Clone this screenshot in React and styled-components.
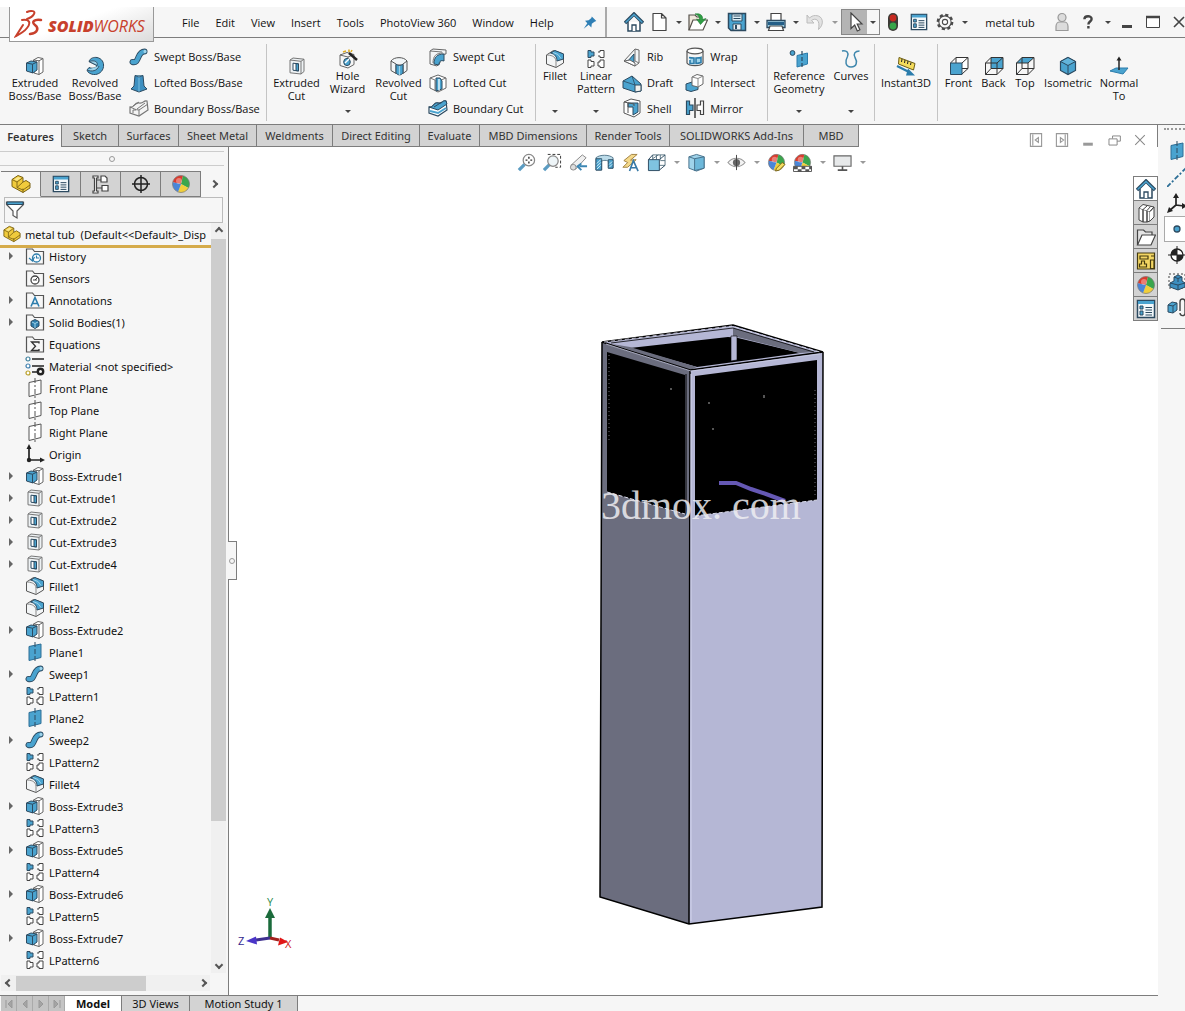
import styled, { createGlobalStyle } from "styled-components";

const blue = "#4aa3cf";
const sky = "#9fd3ea";
const ink = "#2c4a60";
const line = "#7d7d7d";

/* all glyphs are drawn on a 20 x 20 grid */
const art = {
  home: (
    <>
      <path d="M4 10v9h12v-9" fill="#fff" stroke={ink} strokeWidth="1.5" />
      <path d="M1 11 10 2l9 9" fill="none" stroke={ink} strokeWidth="3.4" />
      <path d="M1.6 10.6 10 2.4l8.4 8.2" fill="none" stroke={blue} strokeWidth="1.4" />
      <path d="M8 19v-6h4v6" fill="#fff" stroke={ink} strokeWidth="1.3" />
    </>
  ),
  file: <path d="M4 1.5h8.5l4.500 4.500v12.500H4zM12.500 1.500v4.500H17" fill="#fff" stroke="#444" strokeWidth="1.200" strokeLinejoin="round" />,
  open: (
    <>
      <path d="M1 18V3h6l2 2h4v4" fill="#f0e9dd" stroke="#55504a" strokeWidth="1.200" />
      <path d="M1 18 5 8h14.500L15 18z" fill="#fff" stroke="#55504a" strokeWidth="1.200" />
      <path d="M7 2c6-1 8 2 7.500 5.500l3.500-1-5.500 6L8.500 7l3 1C11.500 5 10.500 3 7 2z" fill="#2f9e44" stroke="#1f7a33" strokeWidth=".600" />
    </>
  ),
  save: (
    <>
      <path d="M1.500 1.500h17v17H4l-2.500-2.500z" fill={blue} stroke={ink} strokeWidth="1.500" />
      <path d="M5 2h10v7H5z" fill="#dceef6" stroke={ink} />
      <path d="M6.500 4h7M6.500 6.500h7" stroke={ink} />
      <path d="M6 12h8v6H6z" fill="#e9eef2" stroke={ink} />
      <path d="M8 13h2v4H8z" fill={ink} />
    </>
  ),
  print: (
    <>
      <path d="M5 1.500h10V9H5z" fill="#fff" stroke="#444" strokeWidth="1.200" />
      <path d="M1 8.500h18v7H1z" fill={sky} stroke={ink} strokeWidth="1.300" />
      <path d="M2 11.500h16" stroke="#245f88" strokeWidth="3" />
      <path d="M4 14h12l1.500 4.500h-15z" fill="#fff" stroke="#444" strokeWidth="1.200" />
    </>
  ),
  undo: <path d="M2 3v8h7L6.500 8.500c4-3 9-1 7 9 6-5 5-14-3-14-3 0-4 1-6 2.500z" fill="#e2e2e2" stroke="#bcbcbc" />,
  cursor: <path d="M6 1v15.500l3.700-3.500 2.600 6 2.600-1.200-2.700-5.800H17z" fill="#fff" stroke="#444" strokeWidth="1.200" />,
  traffic: (
    <>
      <rect x="5" y="1" width="10" height="18" rx="5" fill="#3c3b36" />
      <circle cx="10" cy="6" r="3.400" fill="#c62a20" />
      <circle cx="10" cy="14" r="3.400" fill="#37a549" />
    </>
  ),
  list: (
    <>
      <path d="M1.500 1.500h17v17h-17z" fill="#f4f9fb" stroke={ink} strokeWidth="1.500" />
      <path d="M2 2h16v3H2z" fill={blue} />
      <path d="M4 7h3v3H4zM4 12h3v4H4z" fill={blue} stroke={ink} />
      <path d="M9.500 8.500H16M9.500 11H16M9.500 13.500H16M9.500 16H16" stroke={ink} strokeWidth="1.100" />
    </>
  ),
  gear: (
    <>
      <circle cx="10" cy="10" r="8" fill="none" stroke="#4a4a4a" strokeWidth="2.600" strokeDasharray="3.500 2.780" />
      <circle cx="10" cy="10" r="6.800" fill="#f8f8f8" stroke="#4a4a4a" strokeWidth="1.200" />
      <circle cx="10" cy="10" r="2.900" fill="#fff" stroke="#4a4a4a" strokeWidth="1.200" />
    </>
  ),
  user: (
    <g fill="#dcdcdc" stroke="#999" strokeWidth="1.200">
      <circle cx="10" cy="5.500" r="4" />
      <path d="M4 18.500v-4c0-3 2-4.500 3.500-4.500h5c1.500 0 3.500 1.500 3.500 4.500v4z" />
    </g>
  ),
  help: <path d="M5.500 6.500C5.500 1.500 14.500 1.500 14.500 6.300c0 3-4 3.200-4 6.700M10.500 15v3" fill="none" stroke="#444" strokeWidth="3" />,
  min: <path d="M5 14.500h10" stroke="#444" strokeWidth="3" />,
  max: (
    <>
      <path d="M3.500 4.500h13v11h-13z" fill="#fff" stroke="#444" />
      <path d="M3 5h14" stroke="#444" strokeWidth="2.500" />
    </>
  ),
  close: <path d="m5 5 10 10M15 5 5 15" stroke="#444" strokeWidth="1.600" />,
  pin: <path d="m12 4 5 5-2 .6-3 2.400-.5 4-3-3L3 17.500 7 11.500 4.500 8.500l4-.500 3-2.500z" fill="#2f7fb5" />,
  boss: (
    <>
      <path d="M8.500 4 13 1.500 18 2.500v13.500L14 18.500l-5-1.500z" fill="#fff" stroke="#666" />
      <path d="M14 4.800 18 2.500M14 4.800v13.700M14 4.800 8.500 4" stroke="#666" fill="none" />
      <path d="m1.500 7 4.500-2 6 1v8l-4 3-6.500-2z" fill={blue} stroke={ink} />
      <path d="m1.500 7 6 1.200L12 6M7.500 8.200V17" fill="none" stroke={ink} />
    </>
  ),
  cut: (
    <>
      <path d="M3 4 6 2l11 1.200v12.300L14 18 3 16.800z" fill="#eef2f4" stroke="#777" />
      <path d="M3 4l11 1.300V18M14 5.300l3-2.100" fill="none" stroke="#777" />
      <path d="M6 7.200l5.500.6v7.200L6 14.200z" fill="#fff" stroke={ink} />
      <path d="M9 7.600l2.500.3V15L9 14.500z" fill={blue} stroke={ink} />
    </>
  ),
  revolve: (
    <>
      <path d="M4 5.500C5 2 9 1 12 1.500c5 1 7 5 6.500 9-.500 5-5 8.500-10 8-3-.300-6-2-6.500-4.500l2-2.500c4 1.500 7 .500 8-2z" fill={blue} stroke={ink} />
      <path d="M4 5.500 12 9.500c1.500-3-2-6-8-4zM2 14c5 2 10 1 12-4" fill={sky} stroke={ink} strokeWidth=".900" />
    </>
  ),
  revolveCut: (
    <>
      <path d="M2 5c3-4.500 13-4.500 16 0v9.500l-4 3V9H7v8.500l-5-3z" fill="#f1f5f7" stroke="#555" />
      <path d="M7 8c2 2 5 2 7 0v9c-2 2.500-5 2.500-7 0z" fill={blue} stroke={ink} />
      <path d="M2 5l5 3M18 5l-4 3" stroke="#555" fill="none" />
      <path d="M10.500 10v9" stroke={sky} strokeWidth="1.200" />
    </>
  ),
  hole: (
    <>
      <path d="m2 6 7-2.500L16 5.500v10L10 19l-8-2.500z" fill="#f6f6f6" stroke="#666" />
      <path d="m2 6 8 2L16 5.500M10 8v2" fill="none" stroke="#666" />
      <ellipse cx="9" cy="13" rx="3.300" ry="3.600" fill={blue} stroke={ink} />
      <path d="m7 14 4-4" stroke="#fff" strokeWidth="1.500" />
      <path d="m11 4 8 7" stroke="#222" strokeWidth="2.400" />
      <path d="m5 3 3-1M11 .500V3M14 1l-1 2" stroke="#e0ae26" strokeWidth="1.600" />
    </>
  ),
  sweep: (
    <>
      <path d="M3.500 15c7 2 4.500-10.500 12-10.500" fill="none" stroke={ink} strokeWidth="6" strokeLinecap="round" />
      <path d="M3.500 15c7 2 4.500-10.500 12-10.500" fill="none" stroke={blue} strokeWidth="4.200" strokeLinecap="round" />
      <ellipse cx="16" cy="4.500" rx="1.500" ry="1.800" fill={sky} />
    </>
  ),
  loft: (
    <>
      <path d="M6 2.500h8l1 10.500 3 3-8 3-8-3 3-3z" fill="#3d8fc0" stroke={ink} />
      <path d="m6 2.500 4 1.500 4-1.500" fill={sky} stroke={ink} strokeWidth=".800" />
      <path d="M10 4.500V18.500" stroke="#7cc1e2" />
    </>
  ),
  boundary: (
    <>
      <path d="M1 9c5 1 4-5 9-4s4-3 8-2l1 9-9 6-9-3z" fill="#f4f4f4" stroke="#777" strokeWidth="1.200" />
      <path d="M1 9c3 1 5 3 9 3l9-6M10 12v6M4 8l6-4M8 11l8-6M4 15v-3h3" fill="none" stroke="#777" />
    </>
  ),
  sweepCut: (
    <>
      <path d="M2 4 5 2l13 1v4c-6 0-6 4-6 9l-3 3-7-2z" fill="#f3f5f6" stroke="#666" />
      <path d="M2 4l12 1M5 16c0-7 3-10 10-10" fill="none" stroke="#777" />
      <path d="M6 17C6 10 9 7 16 7v7c-3-1-5 0-5 4z" fill={blue} stroke={ink} />
    </>
  ),
  loftCut: (
    <>
      <path d="m2 5 8-3 8 3v10l-8 4-8-4z" fill="#fff" stroke="#666" />
      <path d="m2 5 5 2v11M18 5l-5 2" fill="none" stroke="#777" />
      <path d="M8 5h4l2 3v8l-6 2z" fill={blue} stroke={ink} />
      <path d="M11 6v11" stroke="#e2f4fb" strokeWidth="1.500" />
    </>
  ),
  boundaryCut: (
    <>
      <path d="M1 9c5 1 4-5 9-4s4-3 8-2l1 9-9 6-9-3z" fill="#fff" stroke={ink} strokeWidth="1.200" />
      <path d="M1 9c5 1 4-5 9-4s4-3 8-2l1 3-9 6z" fill={blue} stroke={ink} />
      <path d="m2 13 8 2 8-5" fill="none" stroke={blue} strokeWidth="2" />
      <path d="M6 9l8-5" fill="none" stroke={ink} />
    </>
  ),
  fillet: (
    <>
      <path d="m1.500 6 7-4.500 10 3.500V14L11 18.500 1.500 15z" fill="#f3f5f6" stroke="#555" />
      <path d="M11 18.500V12M1.500 6c4 0 9 1 9.500 6" fill="none" stroke="#888" />
      <path d="m5.500 4 4.500-2.500 8.500 3.500v5L12 12c0-4-2-7-6.500-8z" fill={blue} stroke={ink} />
      <path d="m8 3.500 5 2 3 4" fill="none" stroke={sky} />
    </>
  ),
  pattern: (
    <g fill="#fff" stroke="#444">
      <path d="M2 1.500h3v1.500h3v4H5v1.500H2z" fill={blue} stroke={ink} />
      <path d="M12 3h2V1.500h4v7h-4V7h-2M8 12.500H5V11H2v7.500h3V17h3zM12 13h2v-2h4v7.500h-4V17h-2z" />
    </g>
  ),
  rib: (
    <>
      <path d="M2 14 13 2l4 1v13l-4 3z" fill="#f3f5f6" stroke="#666" />
      <path d="m5 15 7-8v10z" fill={blue} stroke={ink} />
      <path d="M13 2v12l4 2" fill="none" stroke="#777" />
      <path d="m2 14 6-1 5 3v3z" fill="#fff" stroke="#666" />
    </>
  ),
  draft: (
    <>
      <path d="m1 8 9-5 9 8v7l-6 1-12-4z" fill={blue} stroke={ink} />
      <path d="M13 12h6v6l-6 1z" fill="#f1f1ee" stroke={ink} />
      <path d="m1 8 12 4L10 3" fill="none" stroke={ink} strokeWidth=".800" />
    </>
  ),
  shell: (
    <>
      <path d="m2 4 7-3 9 2v12l-6 4-10-4z" fill="#fff" stroke="#555" />
      <path d="M6 5h10v9l-5 3V9H6z" fill={blue} stroke={ink} />
      <path d="m2 4 10 2v2M6 5v10" fill="none" stroke="#555" />
    </>
  ),
  wrap: (
    <>
      <path d="M2 4v12c2 3.500 14 3.500 16 0V4" fill="#f6f6f6" stroke="#555" strokeWidth="1.200" />
      <ellipse cx="10" cy="4" rx="8" ry="2.800" fill="#fff" stroke="#555" strokeWidth="1.200" />
      <path d="M4 10.500c2 .500 3 .500 5 .500v5.500H5V13M16 10.500c-1 .500-3 .500-5 .500v5.500c2 0 3-.500 5-1z" fill={sky} stroke="#2c7dac" strokeWidth="1.600" />
    </>
  ),
  intersect: (
    <>
      <path d="m1 11 6-2 6 2v5.500l-7 2L1 17z" fill={blue} stroke={ink} />
      <path d="m7 4 5-2.500 6 1.500v8l-5 3-6-1.500z" fill="#fff" stroke="#666" />
      <path d="m7 4 6 1.500L18 3M13 5.500V14" fill="none" stroke="#888" />
    </>
  ),
  mirror: (
    <>
      <path d="M1.500 3h3v4h3.500v5.500H4.500v4h-3z" fill={blue} stroke={ink} strokeWidth="1.200" />
      <path d="M18.500 3h-3v4H12v5.500h3.500v4h3z" fill="#fff" stroke="#444" strokeWidth="1.200" />
      <path d="M10 0v20" stroke="#222" strokeWidth="1.300" />
    </>
  ),
  reference: (
    <>
      <circle cx="3.500" cy="4" r="2.400" fill={blue} stroke={ink} />
      <path d="M8 6.500 18.500 4v11L8 18z" fill={blue} stroke="#2c7dac" />
      <path d="M13 2v18" stroke={ink} strokeWidth="1.200" strokeDasharray="4 2" />
    </>
  ),
  curves: <path d="M1 2c5-1 7 2 5.500 5.500C4 12 4 18 10 18s6.500-5.500 4-9.500C12 5 14 2 18.500 2" fill="none" stroke="#3f87ad" strokeWidth="1.500" />,
  instant: (
    <>
      <path d="m3 1.500 16 6-1.500 6.500-15-6z" fill="#f5dc5c" stroke="#6d5d14" />
      <path d="m6 3-.500 3M9 4l-.500 3M12 5l-.500 3M15 6.500 14.500 9" stroke="#222" />
      <path d="m1 10 12 6" stroke="#2c7dac" strokeWidth="2.200" />
      <path d="m12 12.500 7 7H10z" fill="#2c7dac" />
    </>
  ),
  front: (
    <>
      <path d="M7 1.500h12v11H7zM1.500 7 7 1.500M13 7l6-5.500M13 18l6-5.500" fill="#fff" stroke="#333" />
      <path d="M1.500 7H13v11.500H1.500z" fill={blue} stroke={ink} />
    </>
  ),
  back: (
    <>
      <path d="M7 1.500h12v11H7z" fill={blue} stroke="#333" />
      <path d="M1.500 7H13v11.500H1.500zM1.500 7 7 1.500M13 7l6-5.500M13 18.500l6-6M1.500 18.500l5.500-6" fill="none" stroke="#333" />
    </>
  ),
  top: (
    <>
      <path d="M7 1.500h12L13 7H1.500z" fill={blue} />
      <path d="M7 1.500h12v11H7zM1.500 7H13v11.500H1.500zM1.500 7 7 1.500M13 7l6-5.500M13 18.500l6-6M1.500 18.500l5.500-6" fill="none" stroke="#333" />
    </>
  ),
  iso: (
    <>
      <path d="m10 1.500 7.500 4v9L10 18.500l-7.500-4v-9z" fill={blue} stroke={ink} strokeWidth="1.200" />
      <path d="m2.500 5.500 7.500 4 7.500-4L10 1.500z" fill="#62b4db" stroke={ink} />
      <path d="M10 9.500v9" stroke={ink} />
    </>
  ),
  normal: (
    <>
      <path d="m1 15 6-3h12l-5 6z" fill={blue} stroke="#2c7dac" />
      <path d="M10 14V3" stroke="#222" strokeWidth="1.500" />
      <path d="m10 .500 2.500 4h-5z" fill="#222" />
    </>
  ),
  part: (
    <>
      <path d="m1 5.500 6-4 5 2v4.500l3-1.500L19 9v5l-7 4.500L1 12.500z" fill="#f0cb3c" stroke="#7a6215" />
      <path d="m1 5.500 5 2.500v5.500M6 8l6-4.500M12 8l-6 5.500 6 2.500 7-5M12 14.500v4" fill="none" stroke="#7a6215" strokeWidth=".900" />
      <path d="m3 5.500 4-2.500 3 1-4 2.700z" fill="#fae88e" />
    </>
  ),
  tree: (
    <g fill="#fff" stroke="#444" strokeWidth="1.200">
      <path d="M2 2h5v2H5.500v13H7v2H2v-2h1.500V4H2z" />
      <path d="M10 2h4l2 2v4h-6zM11 11.500h6v5.500h-6zM5.500 6H10M5.500 14H11" />
    </g>
  ),
  target: (
    <>
      <circle cx="10" cy="10" r="6.500" fill="none" stroke="#222" strokeWidth="1.500" />
      <path d="M10 1v18M1 10h18" stroke="#222" strokeWidth="1.500" />
    </>
  ),
  ball: (
    <>
      <path d="M10 10 1.700 8.200A8.500 8.500 0 0 1 12 1.700z" fill="#dd3a2c" />
      <path d="M10 10 12 1.700a8.500 8.500 0 0 1 5.500 12.200z" fill="#3aa64c" />
      <path d="m10 10 7.500 3.900A8.500 8.500 0 0 1 7 18z" fill="#f1cf3b" />
      <path d="M10 10 7 18a8.500 8.500 0 0 1-5.300-9.800z" fill="#4a86d8" />
      <circle cx="10" cy="10" r="8.500" fill="none" stroke="#777" strokeWidth=".700" />
      <circle cx="8" cy="7" r="3" fill="#fff" opacity=".350" />
    </>
  ),
  filter: (
    <>
      <path d="M1.500 2h17v2.500L12 11v7l-4-2.500V11L1.500 4.500z" fill="#fff" stroke="#555" strokeWidth="1.200" />
      <path d="M2 2h16v2.500H2z" fill={blue} stroke={ink} />
    </>
  ),
  material: (
    <>
      <g fill="#fff" strokeWidth="1.200">
        <circle cx="3" cy="3" r="2" stroke="#3d7f9c" />
        <circle cx="3" cy="10" r="2" stroke="#3f7fae" />
        <circle cx="3" cy="17" r="2" stroke="#b9a02a" />
      </g>
      <path d="M7 3h12M7 10h12M7 16h6" stroke="#222" strokeWidth="1.700" />
      <circle cx="15.500" cy="15.500" r="2.700" fill="none" stroke="#222" strokeWidth="2.400" />
    </>
  ),
  plane: (
    <g fill="none" stroke="#555">
      <path d="M4 4.500 16 2v13.500l-12 3z" fill="#fff" />
      <path d="M10 0v20" strokeDasharray="5 2 2 2" />
    </g>
  ),
  planeBlue: (
    <>
      <path d="M4 4.500 16 2v13.500l-12 3z" fill={blue} stroke="#2c6e96" />
      <path d="M10 0v20" stroke={ink} strokeDasharray="5 2" />
    </>
  ),
  origin: (
    <>
      <path d="M4 3v13h13" fill="none" stroke="#222" strokeWidth="1.700" />
      <path d="m4 0 2.500 5h-5zM20 16l-5 2.500v-5z" fill="#222" />
      <circle cx="4" cy="16" r="2.200" fill="#222" />
    </>
  ),
  zoomFit: (
    <>
      <path d="m2 18 6-6" stroke="#5b9cc2" strokeWidth="3.500" />
      <circle cx="12.500" cy="7.500" r="6" fill="#fff" stroke="#888" strokeWidth="1.300" />
      <path d="M12.500 4v2M12.500 9v2M9 7.500h2M14 7.500h2" stroke="#333" strokeWidth="1.500" />
    </>
  ),
  zoomArea: (
    <>
      <path d="M5 1.500h13.500V15H13" fill="none" stroke="#333" strokeDasharray="3 2" />
      <path d="m1 18 6-6" stroke="#5b9cc2" strokeWidth="3.500" />
      <circle cx="10.500" cy="8.500" r="5.500" fill="#eef5f8" stroke="#888" strokeWidth="1.300" />
    </>
  ),
  prevView: (
    <>
      <path d="m2 13 12-11 4 3L7 17z" fill="#f0f0f0" stroke="#888" />
      <circle cx="4.500" cy="15" r="3" fill="#ddd" stroke="#888" />
      <path d="M19 14h-8M13 11l-4 3 4 4" fill="none" stroke="#3c86b3" strokeWidth="2" />
    </>
  ),
  section: (
    <>
      <path d="M1 5c4-3.500 14-3.500 18 0v11h-5V8.500c-2-1-5-1-7 0V18H1z" fill="#bcdcea" stroke="#55788c" />
      <path d="M1 6h6v12H1zM14 7h5v9h-5z" fill={blue} stroke={ink} strokeWidth=".900" />
      <path d="m2 11 4-4M2 14l4-4M2 17l4-4M15 12l3-3M15 15l3-3" stroke="#d9eef7" />
    </>
  ),
  annotate: (
    <>
      <path d="m3 8 8-6.500h6l-7 6 6-.500-9 8H2l5-5z" fill="#f4d98a" stroke="#a08040" />
      <path d="m9 19 4-11 5 11M10.500 15.500h6" fill="none" stroke="#3779a6" strokeWidth="1.700" />
    </>
  ),
  orient: (
    <>
      <path d="M6 2h13v11H6zM10 2v5M14 2v5M6 6l6-4M14 8h5" fill="#fff" stroke="#5c7684" />
      <path d="M1.500 7H13v11.500H1.500z" fill="#7fc3e0" stroke={ink} />
      <path d="m1.500 7 4.500-5M13 7l6-5M13 18l6-5" stroke={ink} />
    </>
  ),
  display: (
    <>
      <path d="m2 4 8-2.500L18 4v12l-8 3-8-3z" fill={sky} stroke="#46708a" />
      <path d="M8 6v12.500l10-2.500V4z" fill="#6db8da" stroke="#46708a" />
      <path d="m2 4 6 2" stroke="#46708a" />
    </>
  ),
  eye: (
    <>
      <path d="M1 10c5-6 13-6 18 0-5 6-13 6-18 0z" fill="#f4f4f4" stroke="#999" strokeWidth="1.200" />
      <circle cx="10" cy="10" r="3.800" fill="#666" />
      <path d="M10 2v16" stroke="#444" />
    </>
  ),
  screen: (
    <>
      <path d="M1 3h18v11H1z" fill="#e7e9ea" stroke="#666" strokeWidth="1.200" />
      <path d="M10 14v4M5 18h10" stroke="#555" strokeWidth="1.700" />
    </>
  ),
  books: (
    <g fill="#fff" stroke="#444">
      <path d="m3 5 4 1.500V19l-4-2zM7 6.500l4 1V19H7zM11 7.500l3 1V18l-3 1z" />
      <path d="m3 5 4-3.500L18 4l-4 4.500M7 6.500 11 3M11 7.500l3.500-4M14 8.500 18 4v10l-4 4" />
    </g>
  ),
  folder: (
    <>
      <path d="M1.500 18V3h6l2 2H16v3" fill="#e4e4e4" stroke="#444" strokeWidth="1.200" />
      <path d="M1.500 18 6 8h13.500L15 18z" fill="#fff" stroke="#444" strokeWidth="1.200" />
    </>
  ),
  palette: (
    <>
      <path d="M1.500 2h17v16h-17z" fill="#f3d663" stroke="#443a10" strokeWidth="1.200" />
      <path d="M4 5h8v3H4zM15 5h3M14.500 9H18v8.500h-3.500zM3.500 16v-3h2v-3h3v3h2v3z" fill="none" stroke="#443a10" strokeWidth="1.200" />
    </>
  ),
  axisLine: <path d="M0 20 20 0" stroke="#2c6e96" strokeWidth="1.800" strokeDasharray="5 2 2 2" />,
  axes: (
    <>
      <path d="M9 3v9l8 1M9 12l-7 6" fill="none" stroke="#222" strokeWidth="1.700" />
      <path d="m9 0 3 5H6zM20 13l-5 3v-6zM0 20l2-6 4 4z" fill="#222" />
    </>
  ),
  point: <circle cx="10" cy="10" r="3" fill={blue} stroke={ink} strokeWidth="1.300" />,
  mass: (
    <>
      <circle cx="10" cy="10" r="6" fill="#fff" stroke="#222" strokeWidth="1.300" />
      <path d="M10 10V4a6 6 0 0 0-6 6zM10 10v6a6 6 0 0 0 6-6z" fill="#222" />
      <path d="M10 1v18M1 10h18" stroke="#222" />
    </>
  ),
  bound: (
    <>
      <path d="M2 3h16v14H2z" fill="none" stroke="#444" strokeDasharray="2 2" />
      <path d="m3 12 4-2V6l4-2 4 2v4l3 2v4l-7 3-8-3z" fill="#3d8fc0" stroke={ink} />
      <path d="m3 12 8 2 7-2M11 14v5M7 6l4 1.500L15 6M11 7.500V11" stroke={ink} fill="none" />
    </>
  ),
  mate: (
    <>
      <path d="m1 8 4-3 5 1v7l-4 3-5-1z" fill={blue} stroke={ink} />
      <path d="m1 8 5 1 4-3M6 9v7" fill="none" stroke={ink} />
      <path d="M13 14V5c0-4 5-4 5 0v11c0 4-5 3-5 0" fill="none" stroke="#444" strokeWidth="1.400" />
    </>
  ),
  dockLeft: <path d="M3 2h14v16H3zM6 3v14M13 7v6l-4-3z" fill="none" stroke="#999" strokeWidth="1.400" />,
  dockRight: <path d="M3 2h14v16H3zM14 3v14M8 7v6l4-3z" fill="none" stroke="#999" strokeWidth="1.400" />,
  docMin: <path d="M2 17h16" stroke="#999" strokeWidth="5" />,
  restore: <path d="M7 7V3h12v8h-5M1.500 7.500H14V17H1.500z" fill="none" stroke="#888" strokeWidth="1.500" />,
  docClose: <path d="m2 2 16 16M18 2 2 18" stroke="#888" strokeWidth="1.700" />,
};

const tabFolder = <path d="M1.500 18V3h6l2 2.500h9V18z" fill="#f7f7f7" stroke="#555" strokeWidth="1.200" />;
art.history = (
  <>
    {tabFolder}
    <circle cx="11.500" cy="12" r="4" fill="#fff" stroke="#2c7dac" strokeWidth="1.300" />
    <path d="M11.500 9.500V12h2.500M4 12l3.500 3 2-4" fill="none" stroke="#2c7dac" strokeWidth="1.200" />
  </>
);
art.sensors = (
  <>
    {tabFolder}
    <circle cx="10" cy="12" r="4" fill="#fff" stroke="#444" strokeWidth="1.300" />
    <path d="m10 12 3-3M8 12h4" stroke="#444" />
  </>
);
art.annotations = (
  <>
    {tabFolder}
    <path d="m6 16.500 4-9 4 9M7.500 13.500h5" fill="none" stroke="#2c7dac" strokeWidth="1.600" />
  </>
);
art.bodies = (
  <>
    {tabFolder}
    <path d="m10 7.500 4 2v4.500L10 16.500 6 14V9.500z" fill="#2c7dac" stroke={ink} />
    <path d="m7 10 3 1.500 3-1.500M10 11.500V16" stroke={sky} fill="none" />
  </>
);
art.equations = (
  <>
    {tabFolder}
    <path d="M14 9.500V8H6.500l4 4.200-4 4.300H14V15" fill="none" stroke="#333" strokeWidth="1.300" />
  </>
);
art.appearance = (
  <>
    {art.ball}
    <path d="m10 16 6-6 3 2-6 6-4 1z" fill="#f4dd62" stroke="#7a6518" />
  </>
);
art.scene = (
  <>
    {art.ball}
    <path d="M.500 14h19v5.500H.500z" fill="#fff" stroke="#555" />
    <path d="M1 14h4v3H1zM9 14h4v3H9zM5 17h4v3H5zM13 17h4v3h-4zM17 14h3v3h-3z" fill="#555" />
  </>
);

function Icon({ name, size = 20 }) {
  return (
    <Glyph $size={size} viewBox="0 0 20 20" aria-hidden="true">
      {art[name]}
    </Glyph>
  );
}

const menus = ["File", "Edit", "View", "Insert", "Tools", "PhotoView 360", "Window", "Help"];

const ribbon = [
  {
    width: 267,
    pad: 5,
    big: [
      { label: ["Extruded", "Boss/Base"], icon: "boss", width: 60 },
      { label: ["Revolved", "Boss/Base"], icon: "revolve", width: 60 },
    ],
    stacks: [[["Swept Boss/Base", "sweep"], ["Lofted Boss/Base", "loft"], ["Boundary Boss/Base", "boundary"]]],
  },
  {
    width: 269,
    pad: 4,
    big: [
      { label: ["Extruded", "Cut"], icon: "cut", width: 51 },
      { label: ["Hole", "Wizard"], icon: "hole", width: 51, menu: true },
      { label: ["Revolved", "Cut"], icon: "revolveCut", width: 51 },
    ],
    stacks: [[["Swept Cut", "sweepCut"], ["Lofted Cut", "loftCut"], ["Boundary Cut", "boundaryCut"]]],
  },
  {
    width: 232,
    pad: 0,
    big: [
      { label: ["Fillet"], icon: "fillet", width: 38, menu: true },
      { label: ["Linear", "Pattern"], icon: "pattern", width: 44, menu: true },
    ],
    stacks: [
      [["Rib", "rib"], ["Draft", "draft"], ["Shell", "shell"]],
      [["Wrap", "wrap"], ["Intersect", "intersect"], ["Mirror", "mirror"]],
    ],
  },
  {
    width: 107,
    pad: 2,
    big: [
      { label: ["Reference", "Geometry"], icon: "reference", width: 58, menu: true },
      { label: ["Curves"], icon: "curves", width: 46, menu: true },
    ],
  },
  { width: 63, pad: 0, big: [{ label: ["Instant3D"], icon: "instant", width: 62 }] },
  {
    pad: 3,
    big: [
      { label: ["Front"], icon: "front", width: 35 },
      { label: ["Back"], icon: "back", width: 35 },
      { label: ["Top"], icon: "top", width: 28 },
      { label: ["Isometric"], icon: "iso", width: 58 },
      { label: ["Normal", "To"], icon: "normal", width: 44 },
    ],
  },
];

const commandTabs = [
  ["Features", 62],
  ["Sketch", 57],
  ["Surfaces", 60],
  ["Sheet Metal", 78],
  ["Weldments", 76],
  ["Direct Editing", 87],
  ["Evaluate", 60],
  ["MBD Dimensions", 107],
  ["Render Tools", 83],
  ["SOLIDWORKS Add-Ins", 134],
  ["MBD", 55],
];

const features = [
  ["History", "history", true],
  ["Sensors", "sensors"],
  ["Annotations", "annotations", true],
  ["Solid Bodies(1)", "bodies", true],
  ["Equations", "equations"],
  ["Material <not specified>", "material"],
  ["Front Plane", "plane"],
  ["Top Plane", "plane"],
  ["Right Plane", "plane"],
  ["Origin", "origin"],
  ["Boss-Extrude1", "boss", true],
  ["Cut-Extrude1", "cut", true],
  ["Cut-Extrude2", "cut", true],
  ["Cut-Extrude3", "cut", true],
  ["Cut-Extrude4", "cut", true],
  ["Fillet1", "fillet"],
  ["Fillet2", "fillet"],
  ["Boss-Extrude2", "boss", true],
  ["Plane1", "planeBlue"],
  ["Sweep1", "sweep", true],
  ["LPattern1", "pattern"],
  ["Plane2", "planeBlue"],
  ["Sweep2", "sweep", true],
  ["LPattern2", "pattern"],
  ["Fillet4", "fillet"],
  ["Boss-Extrude3", "boss", true],
  ["LPattern3", "pattern"],
  ["Boss-Extrude5", "boss", true],
  ["LPattern4", "pattern"],
  ["Boss-Extrude6", "boss", true],
  ["LPattern5", "pattern"],
  ["Boss-Extrude7", "boss", true],
  ["LPattern6", "pattern"],
];

const viewTools = [
  ["zoomFit", "Zoom to Fit"],
  ["zoomArea", "Zoom to Area"],
  ["prevView", "Previous View"],
  ["section", "Section View"],
  ["annotate", "Dynamic Annotation Views"],
  ["orient", "View Orientation", true],
  ["display", "Display Style", true],
  ["eye", "Hide/Show Items", true],
  ["appearance", "Edit Appearance"],
  ["scene", "Apply Scene", true],
  ["screen", "View Settings", true],
];

function Brand() {
  return (
    <BrandCard>
      <BrandMark viewBox="14 7 30 30" aria-hidden="true">
        <g fill="none" stroke="#c8402c" strokeLinecap="round">
          <path d="M27 10c4-2 9-1 7 2-1 2-4 4-7 5" strokeWidth="2" />
          <path d="M22 18c8-1 9 3 5 8-3 4-7 6-11 8l7-11" strokeWidth="2" />
          <path d="M41 18c-7-1-10 2-6 5s3 8-5 9" strokeWidth="2.500" />
        </g>
      </BrandMark>
      <BrandName>
        <b>SOLID</b>WORKS
      </BrandName>
    </BrandCard>
  );
}

function QuickTools() {
  const tools = [
    ["file", "New"],
    ["open", "Open"],
    ["save", "Save"],
    ["print", "Print"],
    ["undo", "Undo"],
  ];
  return (
    <QuickBar>
      <ToolButton $width={24} aria-label="Home"><Icon name="home" /></ToolButton>
      {tools.map(([icon, label]) => (
        <ToolPair key={icon}>
          <ToolButton $width={26} aria-label={label}><Icon name={icon} /></ToolButton>
          <ToolButton $width={13} aria-label={label + " options"}><Caret $faded={icon === "undo"} /></ToolButton>
        </ToolPair>
      ))}
      <SelectPair>
        <ToolButton $width={25} $pressed aria-label="Select"><Icon name="cursor" /></ToolButton>
        <ToolButton $width={12} aria-label="Select options"><Caret /></ToolButton>
      </SelectPair>
      <ToolButton $width={26} aria-label="Rebuild"><Icon name="traffic" /></ToolButton>
      <ToolButton $width={26} aria-label="File Properties"><Icon name="list" size={18} /></ToolButton>
      <ToolButton $width={26} aria-label="Options"><Icon name="gear" size={18} /></ToolButton>
      <ToolButton $width={13} aria-label="More options"><Caret /></ToolButton>
      <DocName>metal tub</DocName>
      <ToolButton $width={26} aria-label="Log in"><Icon name="user" /></ToolButton>
      <ToolButton $width={26} aria-label="Help"><Icon name="help" size={16} /></ToolButton>
      <ToolButton $width={13} aria-label="Help options"><Caret /></ToolButton>
      <ToolButton $width={26} aria-label="Minimize"><Icon name="min" /></ToolButton>
      <ToolButton $width={26} aria-label="Maximize"><Icon name="max" /></ToolButton>
      <ToolButton $width={26} aria-label="Close"><Icon name="close" /></ToolButton>
    </QuickBar>
  );
}

function RibbonGroup({ group }) {
  return (
    <Group $width={group.width} $pad={group.pad}>
      {group.big.map((item) => (
        <BigButton key={item.icon} $width={item.width} $menu={item.menu}>
          <Icon name={item.icon} />
          <BigLabel>{item.label.join("\n")}</BigLabel>
          {item.menu && <Caret />}
        </BigButton>
      ))}
      {(group.stacks || []).map((stack) => (
        <Stack key={stack[0][0]}>
          {stack.map(([label, icon]) => (
            <SmallButton key={label}>
              <Icon name={icon} />
              {label}
            </SmallButton>
          ))}
        </Stack>
      ))}
    </Group>
  );
}

function FeatureManager() {
  return (
    <Panel>
      <PanelGrip><Knob /></PanelGrip>
      <PanelTabs>
        <PanelTab $active aria-label="FeatureManager"><Icon name="part" /></PanelTab>
        <PanelTab aria-label="PropertyManager"><Icon name="list" size={18} /></PanelTab>
        <PanelTab aria-label="ConfigurationManager"><Icon name="tree" /></PanelTab>
        <PanelTab aria-label="DimXpertManager"><Icon name="target" /></PanelTab>
        <PanelTab aria-label="DisplayManager"><Icon name="ball" /></PanelTab>
        <MoreTabs aria-label="More tabs"><Chevron $turn={45} /></MoreTabs>
      </PanelTabs>
      <FilterBox>
        <Icon name="filter" />
        <FilterInput aria-label="Filter" />
      </FilterBox>
      <TreeArea>
        <TreeColumn>
          <RootRow>
            <Icon name="part" size={18} />
            <span>metal tub&nbsp; (Default&lt;&lt;Default&gt;_Disp</span>
          </RootRow>
          <Tree>
            {features.map(([label, icon, expandable]) => (
              <TreeRow key={label}>
                <Expander $shown={expandable} aria-hidden="true" />
                <Icon name={icon} />
                <span>{label}</span>
              </TreeRow>
            ))}
          </Tree>
        </TreeColumn>
        <VScroll>
          <ScrollButton aria-label="Scroll up"><Chevron $turn={-45} /></ScrollButton>
          <VTrack><VThumb /></VTrack>
          <ScrollButton aria-label="Scroll down"><Chevron $turn={135} /></ScrollButton>
        </VScroll>
      </TreeArea>
      <HScroll>
        <ScrollButton aria-label="Scroll left"><Chevron $turn={-135} /></ScrollButton>
        <HThumb />
        <ScrollButton aria-label="Scroll right"><Chevron $turn={45} /></ScrollButton>
      </HScroll>
      <SplitHandle><Knob /></SplitHandle>
    </Panel>
  );
}

function Model() {
  return (
    <ModelSvg viewBox="590 310 250 630" role="img" aria-label="Square tube with open frame">
      <path d="M602 342 733 325 823 352 822 907 689 924 600 897z" fill="#b5b7d5" />
      <path d="M602 342 690 370 689 924 600 897z" fill="#6b6d7e" />
      {/* opening at the top */}
      <path d="M630 348 728 337 738 338 800 353 697 367z" fill="#000" />
      <path d="M733 328 815 352 800 353 733 336z" fill="#6b6d7e" />
      <path d="M731 336h6v24l-6 1z" fill="#b5b7d5" stroke="#000" strokeWidth=".600" />
      <path d="M612 344 630 347 697 367 690 370z" fill="#6b6d7e" />
      {/* see-through sides */}
      <path d="M607 352 685 375V514L607 492z" fill="#000" />
      <path d="M695 376 817 360V500L695 516z" fill="#000" />
      <g fill="none" stroke="#d9daea" strokeWidth="1" strokeDasharray="4 2">
        <path d="M607 492 685 514M695 516 817 500" />
        <path d="M609 355V440M815 390V498" strokeDasharray="1 3" opacity=".500" />
      </g>
      <g fill="none" stroke="#000" strokeWidth="1.500">
        <path d="M602 342 733 325 823 352 690 370z" />
        <path d="M602 342 600 897 689 924 822 907 823 352M690 370 689 924" />
        <path d="M611 343 733 328 814 352" strokeWidth=".800" />
        <path d="M686 374V516" strokeWidth="1" />
      </g>
      <path d="M604 342 732 326M735 327 820 352" fill="none" stroke="#dfe0f0" strokeDasharray="4 3" strokeWidth=".800" />
      <path d="M606 344 691 371 820 354" fill="none" stroke="#c9cbe3" strokeWidth=".800" />
      <path d="M691 374V921" stroke="#d3d5ee" strokeWidth="1" />
      <path d="M719 483 736 483 751 489 766 494 785 501" fill="none" stroke="#6558b4" strokeWidth="4" />
      <g fill="#555">
        <path d="M670 388h2v2h-2zM708 402h2v2h-2zM763 395h2v3h-2zM712 428h2v2h-2z" />
      </g>
      <text x="601" y="519" fill="#eeeef2" fillOpacity=".850" fontFamily="Liberation Serif, serif" fontSize="40">
        3dmox. com
      </text>
    </ModelSvg>
  );
}

function Triad() {
  return (
    <TriadSvg viewBox="236 894 60 56" role="img" aria-label="Orientation triad">
      <path d="M270 938V915" stroke="#1b6b3c" strokeWidth="3.500" />
      <path d="m270 908 5 10h-10z" fill="#1b6b3c" />
      <path d="m270 938-14 2" stroke="#3f3090" strokeWidth="3" />
      <path d="m246 941 10-4.500 1 8z" fill="#4a35c8" />
      <path d="m270 938 9 2" stroke="#a3201c" strokeWidth="3" />
      <path d="m288 942-10 3.500 2-8z" fill="#e01616" />
      <g fontFamily="Open Sans, sans-serif" fontSize="11">
        <text x="267" y="906" fill="#2d8a4e">Y</text>
        <text x="238" y="945" fill="#33288e">Z</text>
        <text x="285" y="948" fill="#d02020">X</text>
      </g>
    </TriadSvg>
  );
}

function App() {
  return (
    <Page>
      <GlobalStyle />
      <TitleBar>
        <Brand />
        <MenuBar>
          {menus.map((name) => <MenuButton key={name}>{name}</MenuButton>)}
        </MenuBar>
        <PinButton aria-label="Pin menu"><Icon name="pin" size={18} /></PinButton>
        <QuickTools />
      </TitleBar>

      <Ribbon>
        {ribbon.map((group) => <RibbonGroup key={group.big[0].icon} group={group} />)}
      </Ribbon>

      <Workspace>
        <Main>
          <TabRow>
            {commandTabs.map(([name, width], i) => (
              <CommandTab key={name} $width={width} $active={i === 0}>{name}</CommandTab>
            ))}
            <DocButtons>
              <DocButton aria-label="Dock left"><Icon name="dockLeft" size={16} /></DocButton>
              <DocButton aria-label="Dock right"><Icon name="dockRight" size={16} /></DocButton>
              <DocButton aria-label="Minimize document"><Icon name="docMin" size={12} /></DocButton>
              <DocButton aria-label="Restore document"><Icon name="restore" size={13} /></DocButton>
              <DocButton aria-label="Close document"><Icon name="docClose" size={12} /></DocButton>
            </DocButtons>
          </TabRow>

          <Split>
            <FeatureManager />
            <Viewport>
              <ViewBar>
                {viewTools.map(([icon, label, menu]) => (
                  <ToolPair key={icon}>
                    <ToolButton $width={26} aria-label={label}><Icon name={icon} size={19} /></ToolButton>
                    {menu && <ToolButton $width={14} aria-label={label + " options"}><Caret $faded /></ToolButton>}
                  </ToolPair>
                ))}
              </ViewBar>
              <TaskPane>
                {["home", "books", "folder", "palette", "ball", "list"].map((icon, i) => (
                  <PaneTab key={icon} $active={i === 0} aria-label={icon}><Icon name={icon} /></PaneTab>
                ))}
              </TaskPane>
              <Model />
              <Triad />
            </Viewport>
          </Split>

          <BottomRow>
            {["First", "Previous", "Next", "Last"].map((step, i) => (
              <StepButton key={step} aria-label={step}>
                <svg width="10" height="10" viewBox="0 0 10 10" aria-hidden="true">
                  <path d={["M2 1v8M8 1v8L4 5z", "M7 1v8L3 5z", "M3 1v8l4-4z", "M8 1v8M2 1v8l4-4z"][i]} fill="#a4a4a4" stroke="#999" />
                </svg>
              </StepButton>
            ))}
            <BottomTab $width={57} $active>Model</BottomTab>
            <BottomTab $width={68}>3D Views</BottomTab>
            <BottomTab $width={108}>Motion Study 1</BottomTab>
          </BottomRow>
        </Main>

        <SideBar>
          <SideGrip />
          <SideTools>
            {["planeBlue", "axisLine", "axes", "point", "mass", "bound", "mate"].map((icon) => (
              <SideButton key={icon} $active={icon === "point"} aria-label={icon}><Icon name={icon} /></SideButton>
            ))}
          </SideTools>
        </SideBar>
      </Workspace>
    </Page>
  );
}

export default App;

const GlobalStyle = createGlobalStyle`
  * {
    box-sizing: border-box;
  }
  body {
    margin: 0;
    background: #fff;
    color: #111;
    font-family: "Open Sans", "Noto Sans", sans-serif;
    font-size: 11px;
    line-height: 13px;
    overflow: hidden;
  }
  button {
    margin: 0;
    padding: 0;
    border: 0;
    background: none;
    color: inherit;
    font: inherit;
    white-space: nowrap;
  }
`;

const Page = styled.div`
  display: flex;
  flex-direction: column;
  height: 100vh;
  padding-top: 7px;
`;

const Glyph = styled.svg`
  flex: none;
  display: block;
  width: ${(p) => p.$size}px;
  height: ${(p) => p.$size}px;
`;

const Caret = styled.i`
  width: 0;
  height: 0;
  border: 3px solid transparent;
  border-top-color: ${(p) => (p.$faded ? "#999" : "#444")};
  border-bottom: 0;
`;

const Chevron = styled.i`
  width: 6px;
  height: 6px;
  border: solid #555;
  border-width: 2px 2px 0 0;
  transform: rotate(${(p) => p.$turn}deg);
`;

const TitleBar = styled.header`
  display: flex;
  flex: none;
  height: 31px;
  padding-left: 9px;
  background: #f6f6f6;
  border-bottom: 1px solid ${line};
`;

const BrandCard = styled.div`
  display: flex;
  flex: none;
  align-items: center;
  gap: 4px;
  width: 145px;
  height: 35px;
  padding-left: 4px;
  z-index: 1;
  background: linear-gradient(160deg, #fff 45%, #dcdcdc);
  border: 1px solid #999;
  border-top: 0;
`;

const BrandMark = styled.svg`
  flex: none;
  width: 30px;
  height: 30px;
`;

const BrandName = styled.span`
  color: #c8402c;
  font-family: "Open Sans", sans-serif;
  font-size: 16px;
  font-style: italic;
  font-weight: 400;
  line-height: 20px;
  padding-top: 4px;

  b {
    font-weight: 800;
  }
`;

const MenuBar = styled.nav`
  display: flex;
  flex: none;
  align-items: center;
  gap: 16px;
  width: 398px;
  padding-left: 28px;
`;

const MenuButton = styled.button``;

const PinButton = styled.button`
  display: flex;
  flex: none;
  align-items: center;
  width: 55px;
  padding-left: 29px;
  border-right: 2px solid #aaa;
`;

const QuickBar = styled.div`
  display: flex;
  flex: 1;
  align-items: center;
  padding-left: 15px;
  min-width: 0;
  overflow: hidden;
`;

const ToolPair = styled.div`
  display: flex;
  flex: none;
`;

const ToolButton = styled.button`
  display: flex;
  flex: none;
  align-items: center;
  justify-content: center;
  width: ${(p) => p.$width}px;
  height: 24px;
  background: ${(p) => (p.$pressed ? "#b4b4b4" : "none")};
`;

const SelectPair = styled.div`
  display: flex;
  flex: none;
  border: 1px solid #888;
`;

const DocName = styled.span`
  flex: 1 0 78px;
  text-align: center;
  white-space: nowrap;
`;

const Ribbon = styled.div`
  display: flex;
  flex: none;
  height: 87px;
  padding: 6px 0 3px;
  background: #f6f6f6;
  border-bottom: 1px solid ${line};
`;

const Group = styled.div`
  display: flex;
  flex: none;
  width: ${(p) => (p.$width ? p.$width + "px" : "auto")};
  padding-left: ${(p) => p.$pad}px;
  border-right: ${(p) => (p.$width ? "1px solid #c4c4c4" : "0")};
`;

const BigButton = styled.button`
  display: flex;
  flex: none;
  flex-direction: column;
  align-items: center;
  width: ${(p) => p.$width}px;
  padding-top: ${(p) => (p.$menu ? 5 : 12)}px;
`;

const BigLabel = styled.span`
  height: 41px;
  text-align: center;
  white-space: pre;
`;

const Stack = styled.div`
  display: flex;
  flex-direction: column;
  padding-left: 4px;

  & + & {
    padding-left: 12px;
  }
`;

const SmallButton = styled.button`
  display: flex;
  align-items: center;
  gap: 5px;
  height: 26px;
`;

const Workspace = styled.div`
  display: flex;
  flex: 1;
  min-height: 0;
`;

const Main = styled.main`
  display: flex;
  flex: 1;
  flex-direction: column;
  min-width: 0;
  font-family: "Noto Sans", sans-serif;
`;

const TabRow = styled.nav`
  display: flex;
  flex: none;
  height: 22px;
`;

const CommandTab = styled.button`
  flex: none;
  width: ${(p) => p.$width}px;
  background: ${(p) => (p.$active ? "#f6f6f6" : "#d3d3d3")};
  border-right: 1px solid ${line};
  border-bottom: ${(p) => (p.$active ? "0" : "1px solid " + line)};
  color: #333;
  font-weight: ${(p) => (p.$active ? 600 : 400)};
`;

const DocButtons = styled.div`
  display: flex;
  flex: 1;
  justify-content: flex-end;
  padding: 7px 4px 0 0;
  border-right: 1px solid ${line};
`;

const DocButton = styled.button`
  display: flex;
  align-items: center;
  justify-content: center;
  width: 26px;
  height: 16px;
`;

const Split = styled.div`
  display: flex;
  flex: 1;
  min-height: 0;
`;

const Panel = styled.aside`
  position: relative;
  display: flex;
  flex: none;
  flex-direction: column;
  width: 229px;
  padding-top: 4px;
  background: #f6f6f6;
  border-right: 1px solid ${line};
`;

const PanelGrip = styled.div`
  display: flex;
  flex: none;
  align-items: center;
  justify-content: center;
  height: 15px;
  margin-right: 4px;
  border: 1px solid #ccc;
  border-width: 1px 0;
`;

const Knob = styled.i`
  width: 6px;
  height: 6px;
  border: 1px solid #999;
  border-radius: 50%;
`;

const PanelTabs = styled.div`
  display: flex;
  flex: none;
  height: 26px;
  margin-top: 5px;
  padding-left: 1px;
`;

const PanelTab = styled.button`
  display: flex;
  align-items: center;
  justify-content: center;
  width: 40px;
  background: ${(p) => (p.$active ? "#f6f6f6" : "#d3d3d3")};
  border: 1px solid ${line};
  border-left: 0;
  border-bottom-color: ${(p) => (p.$active ? "#f6f6f6" : line)};
`;

const MoreTabs = styled.button`
  display: flex;
  align-items: center;
  justify-content: center;
  width: 26px;
`;

const FilterBox = styled.label`
  display: flex;
  flex: none;
  align-items: center;
  height: 26px;
  margin: 0 5px 0 4px;
  border: 1px solid #bbb;
`;

const FilterInput = styled.input`
  flex: 1;
  min-width: 0;
  border: 0;
  outline: none;
  background: none;
  font: inherit;
`;

const TreeArea = styled.div`
  display: flex;
  flex: 1;
  min-height: 0;
`;

const TreeColumn = styled.div`
  flex: 1;
  min-width: 0;
  overflow: hidden;
`;

const RootRow = styled.div`
  display: flex;
  align-items: center;
  gap: 4px;
  height: 25px;
  padding-left: 3px;
  border-bottom: 3px solid #d5ab4b;
  white-space: nowrap;
`;

/* the first row tucks under the rollback bar */
const Tree = styled.ul`
  margin: -3px 0 0;
  padding: 0;
  list-style: none;
`;

const TreeRow = styled.li`
  display: flex;
  align-items: center;
  gap: 4px;
  height: 22px;
  padding-left: 9px;
  white-space: nowrap;
`;

const Expander = styled.i`
  width: 4px;
  height: 0;
  margin-right: 8px;
  border: 4px solid transparent;
  border-left-color: ${(p) => (p.$shown ? "#666" : "transparent")};
  border-right: 0;
`;

const VScroll = styled.div`
  display: flex;
  flex: none;
  flex-direction: column;
  width: 15px;
  margin-right: 2px;
  background: #f0f0f0;
`;

const ScrollButton = styled.button`
  display: flex;
  flex: none;
  align-items: center;
  justify-content: center;
  width: 15px;
  height: 16px;
`;

const VTrack = styled.div`
  flex: 1;
`;

const VThumb = styled.div`
  height: 81%;
  background: #cdcdcd;
`;

const HScroll = styled.div`
  display: flex;
  flex: none;
  align-items: center;
  justify-content: space-between;
  height: 16px;
  margin: 2px 18px 4px 1px;
  background: #f0f0f0;
`;

const HThumb = styled.div`
  width: 130px;
  height: 15px;
  margin-right: auto;
  background: #cdcdcd;
`;

const SplitHandle = styled.div`
  position: absolute;
  top: 394px;
  right: -9px;
  z-index: 1;
  display: flex;
  align-items: center;
  justify-content: center;
  width: 9px;
  height: 39px;
  background: #f6f6f6;
  border: 1px solid ${line};
  border-left: 0;
`;

const Viewport = styled.section`
  position: relative;
  display: flex;
  flex: 1;
  flex-direction: column;
  min-width: 0;
  background: #fff;
`;

const ViewBar = styled.div`
  display: flex;
  flex: none;
  justify-content: center;
  height: 29px;
  padding: 3px 4px 0 0;
`;

const TaskPane = styled.div`
  display: flex;
  flex-direction: column;
  align-self: flex-end;
  width: 25px;
  border: 1px solid ${line};
  border-top: 0;
`;

const PaneTab = styled.button`
  display: flex;
  align-items: center;
  justify-content: center;
  height: 24px;
  background: ${(p) => (p.$active ? "#fff" : "#d3d3d3")};
  border-top: 1px solid ${line};
`;

const ModelSvg = styled.svg`
  position: absolute;
  left: 361px;
  top: 163px;
  width: 250px;
  height: 630px;
`;

const TriadSvg = styled.svg`
  position: absolute;
  left: 7px;
  bottom: 45px;
  width: 60px;
  height: 56px;
`;

const BottomRow = styled.footer`
  display: flex;
  flex: none;
  height: 16px;
  padding-left: 1px;
  background: #f6f6f6;
  border-top: 1px solid ${line};
`;

const StepButton = styled.button`
  display: flex;
  align-items: center;
  justify-content: center;
  width: 16px;
  background: #c4c4c4;
  border-right: 1px solid #aaa;
`;

const BottomTab = styled.button`
  width: ${(p) => p.$width}px;
  background: ${(p) => (p.$active ? "#fff" : "#d3d3d3")};
  border-right: 1px solid ${line};
  font-weight: ${(p) => (p.$active ? 700 : 400)};
`;

const SideBar = styled.aside`
  display: flex;
  flex: none;
  flex-direction: column;
  width: 27px;
  padding: 3px 0 0 3px;
  background: #f6f6f6;
  overflow: hidden;
`;

const SideGrip = styled.div`
  flex: none;
  height: 10px;
  margin-left: 3px;
  border-top: 2px dotted #999;
`;

const SideTools = styled.div`
  display: flex;
  flex-direction: column;
  align-items: flex-start;
  padding: 0 0 8px 3px;
  border-bottom: 1px solid ${line};
`;

const SideButton = styled.button`
  display: flex;
  flex: none;
  align-items: center;
  padding-left: 2px;
  width: 26px;
  height: 26px;
  background: ${(p) => (p.$active ? "#fff" : "none")};
  border: 1px solid ${(p) => (p.$active ? "#aaa" : "transparent")};
`;
